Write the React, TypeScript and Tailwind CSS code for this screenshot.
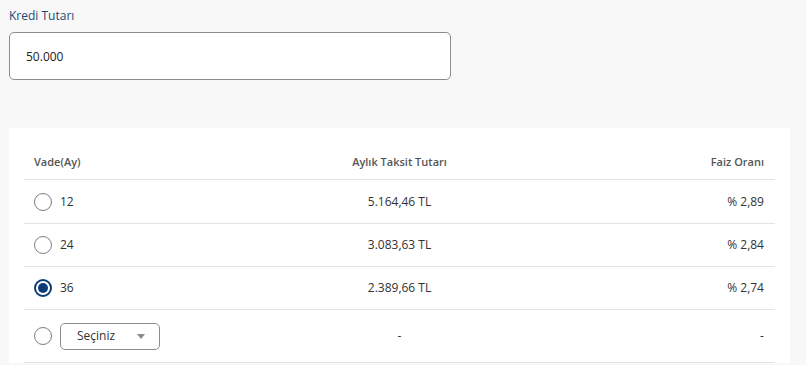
import React from "react";

const rows = [
  { vade: "12", taksit: "5.164,46 TL", faiz: "% 2,89", h: "h-[44px]" },
  { vade: "24", taksit: "3.083,63 TL", faiz: "% 2,84", h: "h-[43px]" },
  { vade: "36", taksit: "2.389,66 TL", faiz: "% 2,74", h: "h-[43px]", selected: true },
];

function Radio({ selected }: { selected?: boolean }) {
  if (selected) {
    return (
      <span className="flex h-[18px] w-[18px] items-center justify-center rounded-full border-[2px] border-[#0c3a78] bg-white">
        <span className="h-[10px] w-[10px] rounded-full bg-[#0c3a78]" />
      </span>
    );
  }
  return <span className="block h-[18px] w-[18px] rounded-full border border-[#7d7d7d] bg-white" />;
}

export default function App() {
  return (
    <div
      className="h-[365px] w-[806px] overflow-hidden bg-[#f8f8f8] pl-[9px] pt-[7px]"
      style={{ fontFamily: '"Open Sans", "Noto Sans", sans-serif' }}
    >
      <div className="text-[12px] leading-[18px] text-[#1a4a7a]">Kredi Tutarı</div>
      <div className="mt-[7px] flex h-[48px] w-[442px] items-center rounded-[5px] border border-[#8c8c8c] bg-white pl-[16px] pt-[2px] text-[12px] text-[#222]">
        50.000
      </div>
      <div className="mt-[48px] w-[781px] bg-white px-[15px] pt-[17px]">
        <div className="grid h-[35px] grid-cols-3 items-center border-b border-[#e3e3e3] text-[11px] font-semibold text-[#555]">
          <div className="pl-[10px]">Vade(Ay)</div>
          <div className="text-center">Aylık Taksit Tutarı</div>
          <div className="pr-[11px] text-right">Faiz Oranı</div>
        </div>
        {rows.map((r) => (
          <div
            key={r.vade}
            className={`grid ${r.h} grid-cols-3 items-center border-b border-[#e3e3e3] text-[12px] text-[#333]`}
          >
            <div className="flex items-center gap-[8px] pl-[10px]">
              <Radio selected={r.selected} />
              <span>{r.vade}</span>
            </div>
            <div className="text-center">{r.taksit}</div>
            <div className="pr-[11px] text-right">{r.faiz}</div>
          </div>
        ))}
        <div className="grid h-[53px] grid-cols-3 items-center border-b border-[#e3e3e3] text-[12px] text-[#333]">
          <div className="flex items-center gap-[8px] pl-[10px]">
            <Radio />
            <div className="flex h-[27px] w-[100px] items-center justify-between rounded-[5px] border border-[#8c8c8c] bg-white pl-[16px] pr-[14px]">
              <span>Seçiniz</span>
              <svg width="8" height="5" viewBox="0 0 8 5">
                <path d="M0 0 L8 0 L4 5 Z" fill="#8a8a8a" />
              </svg>
            </div>
          </div>
          <div className="text-center">-</div>
          <div className="pr-[11px] text-right">-</div>
        </div>
      </div>
    </div>
  );
}
